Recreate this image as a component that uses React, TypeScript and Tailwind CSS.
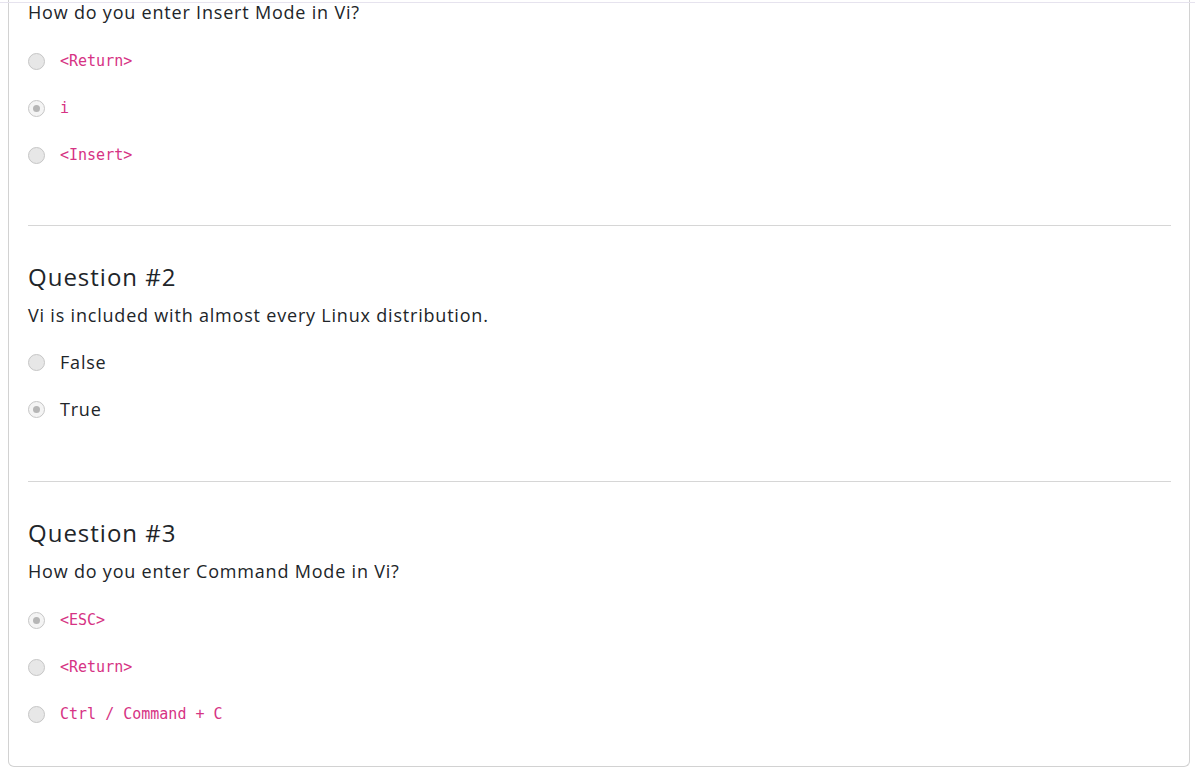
import React from 'react';

type Option = { label: string; code?: boolean; checked?: boolean };
type Question = { title?: string; text: string; options: Option[] };

const questions: Question[] = [
  {
    text: 'How do you enter Insert Mode in Vi?',
    options: [
      { label: '<Return>', code: true },
      { label: 'i', code: true, checked: true },
      { label: '<Insert>', code: true },
    ],
  },
  {
    title: 'Question #2',
    text: 'Vi is included with almost every Linux distribution.',
    options: [{ label: 'False' }, { label: 'True', checked: true }],
  },
  {
    title: 'Question #3',
    text: 'How do you enter Command Mode in Vi?',
    options: [
      { label: '<ESC>', code: true, checked: true },
      { label: '<Return>', code: true },
      { label: 'Ctrl / Command + C', code: true },
    ],
  },
];

function Radio({ checked }: { checked?: boolean }) {
  return (
    <span
      className={`flex h-[17px] w-[17px] shrink-0 items-center justify-center rounded-full border-[1.5px] ${
        checked ? 'border-[#c6c6c6] bg-[#f4f4f4]' : 'border-[#c6c6c6] bg-[#e7e7e7]'
      }`}
    >
      {checked && <span className="h-[7px] w-[7px] rounded-full bg-[#b6b6b6]" />}
    </span>
  );
}

export default function App() {
  return (
    <div
      className="relative min-h-[769px] bg-white pl-2 pr-[5px] text-[#212529]"
      style={{ fontFamily: '"Open Sans", sans-serif' }}
    >
      <div className="absolute left-0 right-0 top-[2px] h-px bg-[#e6e3ee]" />
      <div className="rounded-b-md border-x border-b border-[#d2d2d2] pl-[19px] pr-[18px]">
        {questions.map((q, i) => (
          <div key={i}>
            {i > 0 && <hr className="mb-[35px] border-t border-[#d6d6d6]" />}
            <div className="pb-10">
              {q.title && (
                <h3 className="mb-[10px] text-[24px] font-medium leading-8 tracking-[1px]">{q.title}</h3>
              )}
              <p className="text-[18px] leading-6 tracking-[0.8px]">{q.text}</p>
              <div className={`flex flex-col gap-[23px] ${i === 1 ? 'mt-[23px]' : 'mt-[25px]'}`}>
                {q.options.map((o, j) => (
                  <label key={j} className="flex h-6 items-center gap-[15px]">
                    <Radio checked={o.checked} />
                    {o.code ? (
                      <code
                        className="text-[15px] text-[#d63384]"
                        style={{ fontFamily: '"DejaVu Sans Mono", monospace' }}
                      >
                        {o.label}
                      </code>
                    ) : (
                      <span className="text-[18px] tracking-[0.8px]">{o.label}</span>
                    )}
                  </label>
                ))}
              </div>
            </div>
            {i < questions.length - 1 && <div className={i === 0 ? 'h-[18px]' : 'h-[20px]'} />}
          </div>
        ))}
      </div>
    </div>
  );
}
